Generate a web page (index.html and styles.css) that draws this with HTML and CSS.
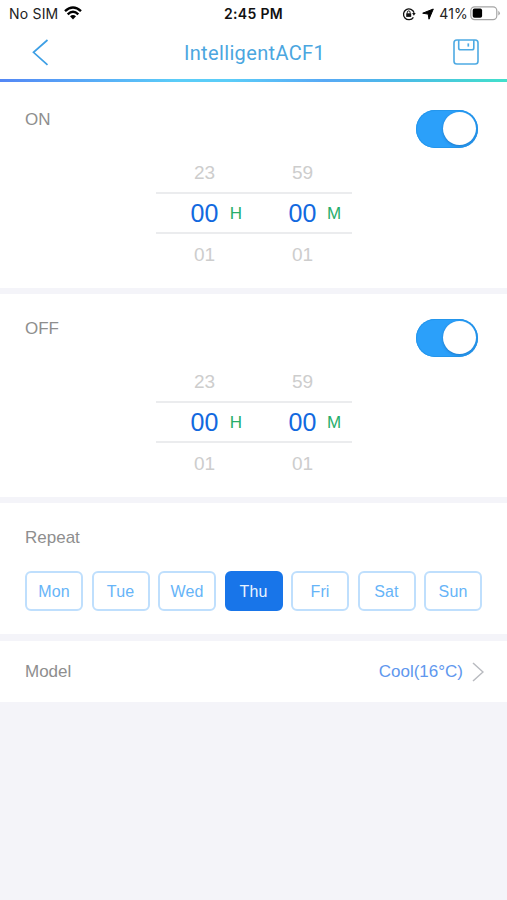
FILE: index.html
```html
<!DOCTYPE html>
<html lang="en">
<head>
<meta charset="utf-8">
<title>IntelligentACF1</title>
<link rel="stylesheet" href="styles.css">
</head>
<body>
<div class="status">
  <div class="status-left">
    <span class="carrier">No SIM</span>
    <svg class="wifi" width="18" height="14" viewBox="0 0 18 14" fill="none" stroke="#000" stroke-width="2.4"><path d="M1 5.1Q9-2.3 17 5.1"/><path d="M3.7 8.3Q9 3.3 14.3 8.3"/><path d="M6 10.3Q9 7.6 12 10.3L9 13.4Z" fill="#000" stroke="none"/></svg>
  </div>
  <div class="clock">2:45 PM</div>
  <div class="status-right">
    <svg width="14" height="14" viewBox="0 0 14 14" fill="none" stroke="#111" stroke-width="1.3"><path d="M11.4 10.3A5.4 5.4 0 1 1 12.1 5.8"/><path d="M10.1 6h3.6l-1.8 2.7z" fill="#111" stroke="none"/><path d="M4.2 6.3h5v3.6h-5z" fill="#111" stroke="none"/><path d="M5.3 6.5V5.3a1.4 1.4 0 0 1 2.8 0v1.2" stroke-width="1"/></svg>
    <svg class="arrow" width="12" height="12" viewBox="0 0 12 12"><path d="M11.3 1L7 11.2 6.2 6.1.7 5.2z" fill="#000" stroke="#000" stroke-width="1" stroke-linejoin="round"/></svg>
    <span class="percent">41%</span>
    <svg class="battery" width="31" height="15" viewBox="0 0 31 15"><rect x=".8" y=".8" width="26" height="12.8" rx="3.8" fill="none" stroke="#a5a5a5" stroke-width="1.2"/><rect x="2.7" y="2.6" width="9.4" height="9.2" rx="1.8"/><path d="M28.3 4.8q3.2 2.4 0 4.8z" fill="#a5a5a5"/></svg>
  </div>
</div>
<header class="nav">
  <svg class="back" width="17" height="27" viewBox="0 0 17 27" fill="none" stroke="#3d9fe5" stroke-width="1.7"><path d="M15.5 1L1.5 13.3l14 12.5"/></svg>
  <h1>IntelligentACF1</h1>
  <svg class="save" width="26" height="26" viewBox="0 0 26 26" fill="none" stroke="#4eaae3" stroke-width="1.6"><rect x="1" y="1" width="24" height="24" rx="2.8"/><path d="M5.700 1v8q0 1.800 1.800 1.800H19q1.800 0 1.800-1.800V1"/><path d="M15.300 4.400v3.200" stroke-width="1.700"/></svg>
</header>
<div class="rainbow"></div>
<main>
  <section class="timer first">
    <div class="label">ON</div>
    <div class="picker">
      <div class="row far"><span>23</span><i></i><span>59</span><i></i></div>
      <div class="row current"><span>00</span><i>H</i><span>00</span><i>M</i></div>
      <div class="row far"><span>01</span><i></i><span>01</span><i></i></div>
    </div>
    <div class="toggle"><div class="knob"></div></div>
  </section>
  <section class="timer">
    <div class="label">OFF</div>
    <div class="picker">
      <div class="row far"><span>23</span><i></i><span>59</span><i></i></div>
      <div class="row current"><span>00</span><i>H</i><span>00</span><i>M</i></div>
      <div class="row far"><span>01</span><i></i><span>01</span><i></i></div>
    </div>
    <div class="toggle"><div class="knob"></div></div>
  </section>
  <section class="repeat">
    <div class="label">Repeat</div>
    <div class="days">
      <div class="day">Mon</div><div class="day">Tue</div><div class="day">Wed</div><div class="day selected">Thu</div><div class="day">Fri</div><div class="day">Sat</div><div class="day">Sun</div>
    </div>
  </section>
  <section class="model">
    <div class="label">Model</div>
    <div class="value">Cool(16°C)</div>
    <svg width="12" height="20" viewBox="0 0 12 20" fill="none" stroke="#b9bbc0" stroke-width="1.5"><path d="M1 1l10 9L1 19"/></svg>
  </section>
</main>
</body>
</html>
```

FILE: styles.css
```css
* { box-sizing: border-box; }
body {
  margin: 0;
  min-height: 900px;
  background: #f4f4f9;
  font-family: "Liberation Sans", Arial, sans-serif;
  font-size: 17px;
  color: #8e8e8e;
}
.status {
  display: grid;
  grid-template-columns: 1fr auto 1fr;
  align-items: center;
  height: 27px;
  padding: 0 6px 0 9px;
  background: #fff;
  color: #222;
  font-family: Inter, sans-serif;
  font-size: 14px;
}
.status-left, .status-right { display: flex; align-items: center; }
.status-right { justify-content: flex-end; }
.carrier { letter-spacing: 0.2px; }
.wifi { margin-left: 6px; margin-top: -1px; }
.clock { margin-right: 3px; font-weight: 600; letter-spacing: 0.35px; color: #111; }
.arrow { margin-left: 6px; }
.percent { margin: 0 2px 0 5px; letter-spacing: 0.2px; }
.nav {
  display: flex;
  justify-content: space-between;
  align-items: center;
  height: 52px;
  padding: 0 28px 2px 32px;
  background: #fff;
}
.nav h1 {
  margin: 1px 0 0 7px;
  font-family: Roboto, sans-serif;
  font-size: 20px;
  font-weight: 400;
  letter-spacing: 0.35px;
  color: #4ba6df;
}
.rainbow {
  height: 3px;
  background: linear-gradient(90deg, #5487f5 0%, #5bcdf8 35%, #5bcdf8 45%, #58a9f5 64%, #4cb9e8 78%, #42e0cb 100%);
}
main { display: grid; gap: 6px; }
section { background: #fff; }
.label { line-height: 20px; }
.timer {
  display: grid;
  grid-template-columns: 131px 196px 1fr;
  height: 203px;
  padding: 25px 29px 0 25px;
}
.timer.first { height: 206px; padding-top: 28px; }
.picker { margin-top: 42px; }
.row {
  display: grid;
  grid-template-columns: 68px 30px 68px 30px;
  align-items: center;
  height: 40px;
}
.row span { padding-left: 29px; text-align: center; }
.row i { font-style: normal; text-align: center; }
.row.far { padding-top: 1px; font-size: 19px; color: #cdcdcd; }
.row.current {
  height: 42px;
  border: solid #ebecee;
  border-width: 2px 0;
  font-size: 25px;
  color: #1269df;
}
.row.current i { padding-right: 6px; padding-top: 2px; font-size: 17px; color: #27ae6a; }
.toggle {
  justify-self: end;
  width: 62px;
  height: 38px;
  padding: 2px;
  border-radius: 19px;
  background: #2ba0fa;
  box-shadow: inset 0 0 0 1px #2496ec;
}
.knob {
  width: 33px;
  height: 33px;
  margin-left: 25px;
  border-radius: 50%;
  background: #fff;
  box-shadow: 0 1px 3px rgba(0, 50, 110, .35);
}
.repeat { height: 131px; padding: 25px 25px 0; }
.days {
  display: grid;
  grid-template-columns: repeat(7, 58px);
  justify-content: space-between;
  margin-top: 23px;
}
.day {
  height: 40px;
  border: 2px solid #bfdffd;
  border-radius: 6px;
  line-height: 37px;
  text-align: center;
  font-size: 16px;
  letter-spacing: 0.1px;
  color: #66b4f8;
}
.day.selected { background: #1875e9; border-color: #1875e9; color: #e9f4ff; }
.model {
  display: flex;
  align-items: center;
  height: 61px;
  margin-top: 1px;
  padding: 1px 23px 0 25px;
}
.value { margin-left: auto; margin-right: 9px; font-size: 17px; color: #6097ee; }
```
